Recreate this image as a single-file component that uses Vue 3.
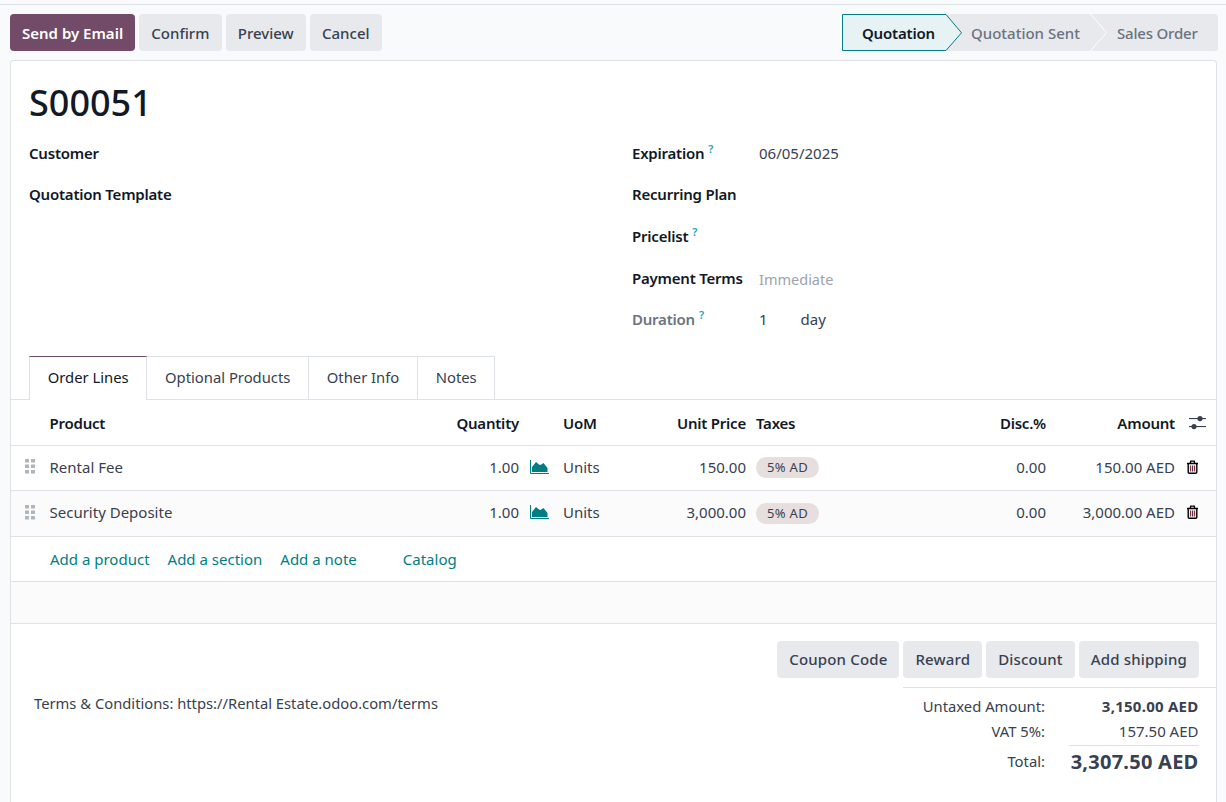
<template>
  <div class="page">
    <div class="control-bar">
      <div class="actions">
        <button class="btn btn-primary" type="button">Send by Email</button>
        <button v-for="label in headerActions" :key="label" class="btn" type="button">{{ label }}</button>
      </div>
      <div class="statusbar">
        <div class="stage stage-current">
          <svg class="stage-shape" width="121" height="38" viewBox="0 0 121 38">
            <path d="M.5.5H104L119.500 18.800 104 36.500H.5Z" fill="#e6f2f3" stroke="#017e84" />
          </svg>
          <span class="stage-label">Quotation</span>
        </div>
        <div class="stage stage-sent">
          <span class="stage-label">Quotation Sent</span>
          <svg class="stage-chevron" width="18" height="37" viewBox="0 0 18 37">
            <path d="M.5 0 16.500 18.500.5 37" fill="none" stroke="#fff" />
          </svg>
        </div>
        <div class="stage stage-order">
          <span class="stage-label">Sales Order</span>
        </div>
      </div>
    </div>

    <main class="sheet">
      <h1 class="order-name">S00051</h1>

      <div class="form-columns">
        <div class="form-group form-group-left">
          <div class="field"><label class="field-label">Customer</label></div>
          <div class="field"><label class="field-label">Quotation Template</label></div>
        </div>
        <div class="form-group">
          <div
            v-for="field in rightFields"
            :key="field.label"
            class="field"
            :class="{ 'field-low': field.placeholder }"
          >
            <label class="field-label" :class="{ muted: field.muted }">
              {{ field.label }}<sup v-if="field.help" class="help">?</sup>
            </label>
            <span v-if="field.label === 'Duration'" class="field-value duration">
              <span>1</span><span>day</span>
            </span>
            <span v-else class="field-value" :class="{ placeholder: field.placeholder }">{{ field.value }}</span>
          </div>
        </div>
      </div>

      <div class="tabs">
        <a
          v-for="(tab, index) in tabs"
          :key="tab"
          class="tab"
          :class="{ active: index === 0 }"
        >{{ tab }}</a>
      </div>

      <div class="lines">
        <div class="line line-head">
          <span />
          <span>Product</span>
          <span class="end">Quantity</span>
          <span />
          <span>UoM</span>
          <span class="end">Unit Price</span>
          <span />
          <span>Taxes</span>
          <span class="end">Disc.%</span>
          <span class="end">Amount</span>
          <span class="cell-action cell-optional">
            <svg width="18" height="16" viewBox="0 0 18 16" fill="#374151">
              <rect x="0" y="3" width="17" height="1.100" />
              <circle cx="11" cy="3.600" r="2.600" />
              <rect x="0" y="11" width="17" height="1.100" />
              <circle cx="5" cy="11.600" r="2.600" />
            </svg>
          </span>
        </div>

        <div
          v-for="(line, index) in orderLines"
          :key="line.product"
          class="line line-row"
          :class="{ shaded: index === 1 }"
        >
          <span class="cell-handle">
            <svg width="10" height="15" viewBox="0 0 10 15" fill="#adb5bd">
              <rect x="0" y="0" width="4" height="3.500" />
              <rect x="6" y="0" width="4" height="3.500" />
              <rect x="0" y="5.500" width="4" height="3.500" />
              <rect x="6" y="5.500" width="4" height="3.500" />
              <rect x="0" y="11" width="4" height="3.500" />
              <rect x="6" y="11" width="4" height="3.500" />
            </svg>
          </span>
          <span>{{ line.product }}</span>
          <span class="end">{{ line.quantity }}</span>
          <span class="cell-forecast">
            <svg width="19" height="14" viewBox="0 0 19 14">
              <path d="M.5 0V13.500H19" fill="none" stroke="#017e84" />
              <path d="M2 12V7L6 2 9 4.500 10.500 5 13.500 3 17.500 8V12Z" fill="#017e84" />
            </svg>
          </span>
          <span>{{ line.uom }}</span>
          <span class="end">{{ line.price }}</span>
          <span />
          <span><span class="tax-tag">5% AD</span></span>
          <span class="end">{{ line.discount }}</span>
          <span class="end">{{ line.amount }}</span>
          <span class="cell-action">
            <svg width="13" height="14" viewBox="0 0 13 14">
              <path d="M1 3.500H12M2.200 3.500V12.200Q2.200 13.300 3.300 13.300H9.700Q10.800 13.300 10.800 12.200V3.500M4.200 3.500 4.800 1.100H8.200L8.800 3.500" fill="none" stroke="#000" stroke-width="1.400" />
              <path d="M4.500 5.500V11.500" stroke="#7a3b2e" stroke-width="1.200" />
              <path d="M6.500 5.500V11.500" stroke="#4b2f6b" stroke-width="1.200" />
              <path d="M8.500 5.500V11.500" stroke="#a03020" stroke-width="1.200" />
            </svg>
          </span>
        </div>

        <div class="add-row">
          <a class="link">Add a product</a>
          <a class="link">Add a section</a>
          <a class="link">Add a note</a>
          <a class="link link-catalog">Catalog</a>
        </div>
        <div class="empty-band" />
      </div>

      <div class="sheet-footer">
        <div class="footer-actions">
          <button v-for="label in footerActions" :key="label" class="btn" type="button">{{ label }}</button>
        </div>
        <div class="footer-body">
          <p class="terms">Terms &amp; Conditions: https://Rental Estate.odoo.com/terms</p>
          <div class="totals">
            <div class="total-row">
              <span class="total-label">Untaxed Amount:</span>
              <strong class="total-value">3,150.00 AED</strong>
            </div>
            <div class="total-row">
              <span class="total-label">VAT 5%:</span>
              <span class="total-value">157.50 AED</span>
            </div>
            <div class="total-row total-row-grand">
              <span class="total-label">Total:</span>
              <strong class="total-value grand">3,307.50 AED</strong>
            </div>
          </div>
        </div>
      </div>
    </main>
  </div>
</template>

<script setup>
const headerActions = ['Confirm', 'Preview', 'Cancel'];
const footerActions = ['Coupon Code', 'Reward', 'Discount', 'Add shipping'];
const tabs = ['Order Lines', 'Optional Products', 'Other Info', 'Notes'];

const rightFields = [
  { label: 'Expiration', help: true, value: '06/05/2025' },
  { label: 'Recurring Plan', value: '' },
  { label: 'Pricelist', help: true, value: '' },
  { label: 'Payment Terms', value: 'Immediate', placeholder: true },
  { label: 'Duration', help: true, muted: true },
];

const orderLines = [
  {
    product: 'Rental Fee', quantity: '1.00', uom: 'Units', price: '150.00', discount: '0.00', amount: '150.00 AED',
  },
  {
    product: 'Security Deposite', quantity: '1.00', uom: 'Units', price: '3,000.00', discount: '0.00', amount: '3,000.00 AED',
  },
];
</script>

<style>
html,
body {
  margin: 0;
  background: #f9fafb;
}
</style>

<style scoped>
.page {
  display: flex;
  flex-direction: column;
  box-sizing: border-box;
  height: 802px;
  overflow: hidden;
  padding-top: 4px;
  color: #374151;
  font-family: "Noto Sans", "Open Sans", sans-serif;
  font-size: 15px;
  line-height: 22px;
}

.control-bar {
  display: flex;
  flex: none;
  justify-content: space-between;
  height: 37px;
  padding: 9px 8px 9px 10px;
  border-top: 1px solid #dee2e6;
}

.actions {
  display: flex;
  gap: 4px;
}

.btn {
  height: 37px;
  padding: 0 12.200px;
  color: #374151;
  font-family: inherit;
  font-size: 15px;
  font-weight: 500;
  background: #e7e9ed;
  border: none;
  border-radius: 4px;
}

.btn-primary {
  padding: 0 12px;
  color: #fff;
  font-weight: 600;
  background: #714b67;
}

.statusbar {
  display: flex;
  height: 37px;
  background: #e7e9ed;
  border-radius: 3px;
}

.stage {
  position: relative;
  display: flex;
  align-items: center;
  color: #6b7280;
  font-weight: 500;
}

.stage-current {
  width: 104px;
  padding-left: 20px;
  box-sizing: border-box;
  color: #111827;
  font-weight: 600;
  letter-spacing: -0.200px;
}

.stage-shape {
  position: absolute;
  top: 0;
  left: 0;
}

.stage-label {
  position: relative;
}

.stage-sent {
  width: 145px;
  padding-left: 25px;
  box-sizing: border-box;
}

.stage-chevron {
  position: absolute;
  top: 0;
  right: -17px;
}

.stage-order {
  width: 127px;
  padding-left: 26px;
  box-sizing: border-box;
  letter-spacing: -0.200px;
}

.sheet {
  flex: 1;
  margin: 0 9px 0 10px;
  background: #fff;
  border: 1px solid #dee2e6;
  border-bottom: none;
  border-radius: 4px 4px 0 0;
}

.order-name {
  margin: 0;
  padding: 18px 18px 0;
  color: #111827;
  font-size: 36px;
  font-weight: 500;
  line-height: 48px;
}

.form-columns {
  display: grid;
  grid-template-columns: 603px 1fr;
  padding: 5px 18px 0;
}

.field {
  display: flex;
  align-items: center;
  box-sizing: border-box;
  height: 41.500px;
}

.field-low {
  padding-top: 2px;
}

.field-label {
  flex: none;
  width: 127px;
  color: #111827;
  font-weight: 600;
  letter-spacing: -0.220px;
  white-space: nowrap;
}

.form-group-left .field-label {
  width: auto;
}

.field-label.muted {
  color: #6b7280;
}

.help {
  margin-left: 4px;
  color: #17a2b8;
  font-size: 11px;
  font-weight: 600;
  line-height: 0;
}

.field-value.placeholder {
  margin-top: 2px;
  color: #9ca3af;
  font-size: 14.500px;
}

.duration {
  display: flex;
  gap: 33px;
}

.tabs {
  display: flex;
  height: 43px;
  margin-top: 16px;
  padding-left: 18px;
  font-size: 14.800px;
  border-bottom: 1px solid #dee2e6;
}

.tab {
  display: flex;
  align-items: center;
  box-sizing: border-box;
  padding: 0 17.700px 2px;
  border-top: 1px solid #dee2e6;
  border-right: 1px solid #dee2e6;
}

.tab.active {
  height: 44px;
  color: #111827;
  background: #fff;
  border-top-color: #714b67;
  border-left: 1px solid #dee2e6;
}

.line {
  display: grid;
  grid-template-columns: 38.500px 369.500px 100px 44px 83px 100px 10px 190px 100px 129px 42px;
  align-items: center;
  border-bottom: 1px solid #dee2e6;
}

.line-head {
  height: 44px;
  padding-top: 1px;
  color: #111827;
  font-weight: 600;
  letter-spacing: -0.220px;
}

.line-row {
  height: 42.500px;
  padding-bottom: 2px;
}

.line-row.shaded {
  background: #fbfbfb;
}

.end {
  text-align: right;
  white-space: nowrap;
}

.cell-handle {
  display: flex;
  padding-left: 14px;
}

.cell-forecast {
  display: flex;
  padding-left: 11px;
}

.cell-action {
  display: flex;
  padding-left: 11px;
}

.cell-optional {
  padding-left: 14px;
}

.tax-tag {
  display: inline-block;
  padding: 0 11px;
  font-size: 13px;
  letter-spacing: 0.300px;
  line-height: 21px;
  background: #e7dfdd;
  border-radius: 11px;
}

.add-row {
  display: flex;
  gap: 18px;
  align-items: center;
  height: 44px;
  padding-left: 39px;
  border-bottom: 1px solid #dee2e6;
}

.link {
  color: #017e84;
}

.link-catalog {
  margin-left: 28px;
}

.empty-band {
  height: 41px;
  background: #fbfbfb;
  border-bottom: 1px solid #dee2e6;
}

.sheet-footer {
  padding-top: 17px;
}

.footer-actions {
  display: flex;
  justify-content: flex-end;
  gap: 4px;
  padding-right: 17px;
}

.footer-actions .btn {
  padding: 0 12px;
  letter-spacing: 0.150px;
}

.footer-body {
  display: flex;
  justify-content: space-between;
  align-items: flex-start;
  margin-top: 9px;
}

.terms {
  margin: 5px 0 0 23px;
  font-size: 14.750px;
}

.totals {
  box-sizing: border-box;
  width: 313px;
  padding: 6px 17.500px 0 0;
  border-top: 1px solid #dee2e6;
}

.total-row {
  display: grid;
  grid-template-columns: 142px 1fr;
  column-gap: 24px;
  height: 25px;
  align-items: center;
  text-align: right;
}

.total-row-grand {
  height: 35px;
}

.total-label {
  font-size: 14.800px;
  white-space: nowrap;
}

.total-value {
  letter-spacing: 0.250px;
  white-space: nowrap;
}

.total-row .total-value:not(strong) {
  letter-spacing: 0;
}

.total-row-grand .total-value {
  border-top: 1px solid #dee2e6;
}

.grand {
  font-size: 20px;
  line-height: 32px;
}
</style>
